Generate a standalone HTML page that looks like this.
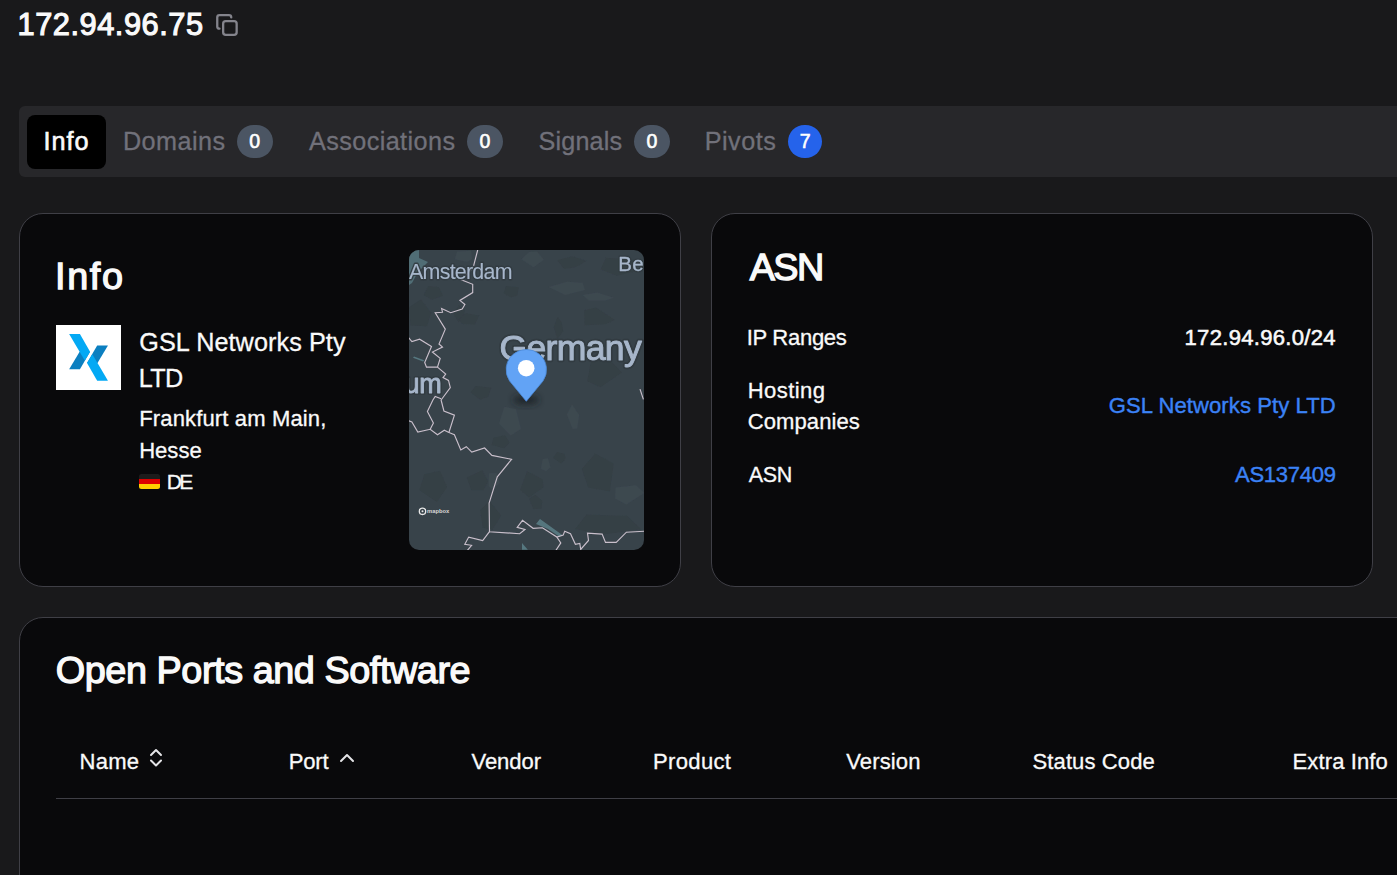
<!DOCTYPE html>
<html><head><meta charset="utf-8"><style>
html,body{margin:0;padding:0}
body{width:1397px;height:875px;overflow:hidden;background:#19191b;position:relative;font-family:"Liberation Sans",sans-serif}
.t{position:absolute;white-space:nowrap}
.b{position:absolute;top:125px;height:33px;border-radius:17px}
.card{position:absolute;box-sizing:border-box;border:1px solid #3f3f46;background:#09090b;border-radius:24px}
</style></head><body>
<div class="t" style="left:17.6px;top:10.0px;font-size:30.8px;line-height:30.8px;letter-spacing:0.509px;color:#fafafa;-webkit-text-stroke:1.1px #fafafa">172.94.96.75</div>
<svg style="position:absolute;left:0;top:0;overflow:visible" width="1" height="1"><g fill="none" stroke="#84848c" stroke-width="2.3" stroke-linecap="round" stroke-linejoin="round"><rect x="223.15" y="21.15" width="13.5" height="13.7" rx="2.6" ry="2.6"/><path d="M219.5,28.65 c-1.25,0 -2.25,-1 -2.25,-2.25 V17.4 c0,-1.25 1,-2.25 2.25,-2.25 h9.5 c1.25,0 2.25,1 2.25,2.25"/></g></svg>
<div style="position:absolute;left:19px;top:106px;width:1420px;height:71px;background:#27272a;border-radius:6px"></div>
<div style="position:absolute;left:27px;top:115px;width:79px;height:54px;background:#000000;border-radius:8px"></div>
<div class="t" style="left:43.6px;top:129.0px;font-size:25.2px;line-height:25.2px;letter-spacing:0.933px;color:#fafafa;-webkit-text-stroke:0.6px #fafafa">Info</div><div class="t" style="left:123.0px;top:129.0px;font-size:25.2px;line-height:25.2px;letter-spacing:0.433px;color:#71717a;-webkit-text-stroke:0.3px #71717a">Domains</div><div class="t" style="left:309.0px;top:129.0px;font-size:25.2px;line-height:25.2px;letter-spacing:0.418px;color:#71717a;-webkit-text-stroke:0.3px #71717a">Associations</div><div class="t" style="left:538.5px;top:129.0px;font-size:25.2px;line-height:25.2px;letter-spacing:0.167px;color:#71717a;-webkit-text-stroke:0.3px #71717a">Signals</div><div class="t" style="left:704.7px;top:129.0px;font-size:25.2px;line-height:25.2px;letter-spacing:0.52px;color:#71717a;-webkit-text-stroke:0.3px #71717a">Pivots</div>
<div class="b" style="left:237px;width:35.5px;background:#4b5563"></div><div class="t" style="left:249.2px;top:132.2px;font-size:19.5px;line-height:19.5px;-webkit-text-stroke:0.6px #fff;color:#fff">0</div>
<div class="b" style="left:467px;width:36px;background:#4b5563"></div><div class="t" style="left:479.5px;top:132.2px;font-size:19.5px;line-height:19.5px;-webkit-text-stroke:0.6px #fff;color:#fff">0</div>
<div class="b" style="left:634px;width:36px;background:#4b5563"></div><div class="t" style="left:646.5px;top:132.2px;font-size:19.5px;line-height:19.5px;-webkit-text-stroke:0.6px #fff;color:#fff">0</div>
<div class="b" style="left:788px;width:34px;background:#2563eb"></div><div class="t" style="left:799.7px;top:132.2px;font-size:19.5px;line-height:19.5px;-webkit-text-stroke:0.6px #fff;color:#fff">7</div>
<div class="card" style="left:19px;top:213px;width:662px;height:374px"></div>
<div class="card" style="left:711px;top:213px;width:662px;height:374px"></div>
<div class="card" style="left:19px;top:617px;width:1500px;height:400px"></div>
<div class="t" style="left:55.0px;top:257.8px;font-size:37.8px;line-height:37.8px;letter-spacing:1.667px;color:#fafafa;-webkit-text-stroke:1.3px #fafafa">Info</div>
<svg style="position:absolute;left:56px;top:325px" width="65" height="65" viewBox="155 145 633 633"><rect x="155" y="145" width="633" height="633" fill="#fff"/>
<polygon points="385,405 487,405 388,575 283,575" fill="#0b7fc0"/>
<polygon points="283,232 388,232 487,405 435,490" fill="#03a9f4"/>
<polygon points="661,345 556,345 457,515 559,515" fill="#0b7fc0"/>
<polygon points="661,688 556,688 457,515 509,430" fill="#03a9f4"/>
</svg>
<div class="t" style="left:139.3px;top:330.0px;font-size:25.2px;line-height:25.2px;letter-spacing:0.093px;color:#fafafa;-webkit-text-stroke:0.3px #fafafa">GSL Networks Pty</div><div class="t" style="left:138.8px;top:366.0px;font-size:25.2px;line-height:25.2px;letter-spacing:-0.6px;color:#fafafa;-webkit-text-stroke:0.3px #fafafa">LTD</div><div class="t" style="left:139.2px;top:407.7px;font-size:22.05px;line-height:22.05px;letter-spacing:0.129px;color:#fafafa;-webkit-text-stroke:0.3px #fafafa">Frankfurt am Main,</div><div class="t" style="left:139.2px;top:440.0px;font-size:22.05px;line-height:22.05px;letter-spacing:0.0px;color:#fafafa;-webkit-text-stroke:0.3px #fafafa">Hesse</div>
<div style="position:absolute;left:139px;top:474px;width:21px;height:15px;border-radius:2.5px;overflow:hidden;background:linear-gradient(#1c1c1c 0 33.3%,#dd0000 33.3% 66.6%,#ffce00 66.6%)"></div>
<div class="t" style="left:166.8px;top:470.7px;font-size:21.0px;line-height:21.0px;letter-spacing:-2.6px;color:#fafafa;-webkit-text-stroke:0.3px #fafafa">DE</div>
<div style="position:absolute;left:409px;top:250px;width:235px;height:300px;border-radius:10px;overflow:hidden"><svg width="235" height="300" viewBox="409 250 235 300" style="display:block">
<defs><filter id="blr" x="-50%" y="-50%" width="200%" height="200%"><feGaussianBlur stdDeviation="3"/></filter>
<filter id="blr2" x="-50%" y="-50%" width="200%" height="200%"><feGaussianBlur stdDeviation="0.6"/></filter></defs>
<rect x="409" y="250" width="235" height="300" fill="#38434a"/>
<g filter="url(#blr2)">
<polygon points="423.6,295.3 428.4,286.1 439.1,287.2 442.9,295.7 432.1,299.8" fill="#353f45"/>
<polygon points="458.4,322.6 453.3,313.3 459.1,305.5 464.9,310.6 463.8,316.8" fill="#353f45"/>
<polygon points="458.7,319.3 466.0,313.3 479.2,315.6 474.9,324.4 462.5,324.1" fill="#353f45"/>
<polygon points="505.9,286.0 518.7,287.3 517.4,295.4 510.5,297.2 503.6,293.3" fill="#353f45"/>
<polygon points="572.2,256.3 586.7,260.9 574.8,267.5 564.0,268.7 557.2,260.3" fill="#353f45"/>
<polygon points="584.6,325.2 584.2,310.2 596.0,307.5 615.0,320.1 605.3,324.3" fill="#353f45"/>
<polygon points="563.1,331.2 557.5,338.9 553.7,327.3 557.4,317.0 561.6,322.0" fill="#353f45"/>
<polygon points="587.2,381.2 591.1,360.3 609.1,358.9 621.9,372.4 600.4,387.3" fill="#353f45"/>
<polygon points="488.2,396.9 479.8,399.5 470.3,392.2 475.7,386.1 491.4,387.7" fill="#353f45"/>
<polygon points="493.3,437.7 505.2,435.3 509.6,442.5 503.9,448.2 491.6,444.9" fill="#353f45"/>
<polygon points="561.4,463.8 553.0,457.9 557.0,451.9 564.2,453.8 565.8,458.1" fill="#353f45"/>
<polygon points="613.7,463.4 609.9,491.5 588.2,487.6 581.7,469.1 595.2,453.6" fill="#353f45"/>
<polygon points="529.1,498.7 535.2,494.7 542.2,500.4 541.5,508.5 533.4,509.2" fill="#353f45"/>
<polygon points="471.3,490.2 466.7,477.6 482.3,470.2 488.0,481.6 483.4,490.2" fill="#353f45"/>
<polygon points="641.3,529.3 603.3,534.5 575.1,529.1 586.6,514.5 627.5,516.1" fill="#353f45"/>
<polygon points="409.0,307.6 421.0,299.5 431.2,312.8 427.0,326.3 410.5,325.5" fill="#353f45"/>
<polygon points="419.3,490.2 424.2,474.2 440.0,470.8 447.2,487.3 436.9,502.1" fill="#353f45"/>
<polygon points="635.5,259.7 635.8,271.2 616.8,275.8 600.6,269.3 605.9,257.7" fill="#353f45"/>
<polygon points="520.1,489.8 527.1,471.2 542.5,479.2 543.7,487.3 529.1,497.4" fill="#353f45"/>
<polygon points="492.3,530.1 482.7,527.6 480.2,510.2 489.2,500.8 501.2,515.4" fill="#353f45"/>
<polygon points="582.6,282.7 584.8,289.9 565.2,295.1 548.7,286.9 567.1,281.7" fill="#3d4850"/>
<polygon points="605.4,300.4 588.8,300.6 582.7,295.1 597.2,292.5 613.8,297.7" fill="#3d4850"/>
<polygon points="543.8,259.8 533.5,267.3 521.5,259.3 529.2,251.9 536.9,251.5" fill="#3d4850"/>
<polygon points="472.1,259.1 467.1,262.0 454.8,259.3 457.1,251.4 471.1,250.8" fill="#3d4850"/>
<polygon points="504.3,406.8 516.0,409.1 521.0,428.9 510.7,435.4 499.0,423.8" fill="#3d4850"/>
<polygon points="566.9,414.6 572.0,404.5 579.2,415.1 577.2,428.6 572.6,428.9" fill="#3d4850"/>
<polygon points="542.8,459.1 547.9,458.2 550.5,467.2 546.0,471.2 540.8,468.8" fill="#3d4850"/>
<polygon points="636.0,485.2 644.2,492.9 626.3,504.4 615.1,498.5 615.6,487.6" fill="#3d4850"/>
<polygon points="496.6,473.0 499.7,483.0 492.7,489.5 488.7,486.2 488.9,473.3" fill="#3d4850"/>
</g>
<polygon points="409,250 419,250 419,258 428,262 418,272 412,283 409,285" fill="#506d75"/>
<polygon points="540,519 563,535.5 559,536.5 548,529 536,524" fill="#5a7f87" opacity="0.85"/>
<polygon points="522,542.9 527.8,549.7 522,549.7" fill="#567880"/>
<polygon points="414,356.6 424.2,360.3 423,361.5 413,357.8" fill="#567880"/>
<g fill="none" stroke="#c9bfcb" stroke-width="1.15" stroke-linejoin="miter">
<polyline points="477.7,250 473.2,267.4 461.3,279.8 472.7,284.3 472.7,292.6 459.9,300.4 464.9,304.5 462.2,309 450.7,312.7 441.6,308.6 442.5,312.2 435.2,312.7 445.3,329.1 439,344 442.5,347 432.4,352 440.2,358.4 437.5,367.1 445.7,374 443,377.6 448.5,380.4 450.3,387.7 441.1,400 443.9,411 454.4,415.1 448.9,432.5 454.4,434.8 460.8,449.9 466.3,446.7 471.8,452.1 484.6,448 491.9,455.4 511.6,459.3 497.3,476.8 489.1,503 489.5,531.7 519.7,533.7 525,529.4 517.2,527.3 522.5,520.3 533.1,528.3 542.4,527.8 556.9,537.1 563.2,535.1 564.7,531.2 570.5,533.7 575.4,544.3 579.8,543.4 580.7,549.5 588.5,540.5 587.5,533.2 602.1,534.1 605.5,542.4 616.2,542.4 626.4,532.2 645,531.2"/>
<polyline points="556.9,537.1 560.8,542.9 555.5,551"/>
<polyline points="489.5,531.7 482.7,540.5 468.7,537.1 464.8,544.3 471.6,545.3 466,552"/>
<polyline points="408,336.9 411.9,341.5 419.6,339.2 431.5,346.5 424.7,362.5 426.5,367.1 437.5,367.1"/>
<polyline points="441.1,398.7 435.2,396.4 432.9,400 427.4,411.4 433.4,422.9 430.2,429.3"/>
<polyline points="408,420.6 411.9,422 417.8,432 430.2,429.3 437.5,434.8 444.3,430.2 448.9,432.5"/>
<polyline points="640,389.1 643.4,399.4"/>
</g>
<g font-family="Liberation Sans" fill="#323b41" stroke="#323b41" stroke-linejoin="round" opacity="0.9"><text x="409.1" y="278.9" font-size="21.4" letter-spacing="-0.75" stroke-width="2.85">Amsterdam</text><text x="618.2" y="271.4" font-size="20.5" letter-spacing="0.5" stroke-width="2.85">Be</text><text x="346" y="393.2" font-size="27" letter-spacing="-0.3" stroke-width="3.9">Belgium</text><text x="499.4" y="360.1" font-size="35.6" letter-spacing="-0.667" stroke-width="4.5">Germany</text></g><g font-family="Liberation Sans" fill="#a9b9cd" stroke="#a9b9cd" stroke-linejoin="round" opacity="0.99"><text x="409.1" y="278.9" font-size="21.4" letter-spacing="-0.75" stroke-width="0.1">Amsterdam</text><text x="618.2" y="271.4" font-size="20.5" letter-spacing="0.5" stroke-width="0.35">Be</text><text x="346" y="393.2" font-size="27" letter-spacing="-0.3" stroke-width="0.9">Belgium</text><text x="499.4" y="360.1" font-size="35.6" letter-spacing="-0.667" stroke-width="1.0">Germany</text></g>
<ellipse cx="526" cy="400" rx="13" ry="5" fill="#1d2226" opacity="0.8" filter="url(#blr)"/>
<path d="M526.3,401.3 L509.6,381 A20.2,20.2 0 1 1 543,381 Z" fill="#62a3f5" stroke="#4c8ad8" stroke-width="0.8"/>
<circle cx="526.2" cy="368.2" r="8.3" fill="#fff"/>
<g transform="translate(422.5,511.3)"><circle r="3.2" fill="none" stroke="#e8e8e8" stroke-width="1.3"/><circle r="1" fill="#e8e8e8"/></g>
<text x="427" y="513.3" font-family="Liberation Sans" font-weight="700" font-size="5.8" fill="#d8d8d8">mapbox</text>
</svg>
</div>
<div class="t" style="left:749.7px;top:249.4px;font-size:37.8px;line-height:37.8px;letter-spacing:-1.6px;color:#fafafa;-webkit-text-stroke:1.3px #fafafa">ASN</div><div class="t" style="left:746.7px;top:327.0px;font-size:22.05px;line-height:22.05px;letter-spacing:-0.3px;color:#fafafa;-webkit-text-stroke:0.3px #fafafa">IP Ranges</div><div class="t" style="left:747.7px;top:380.0px;font-size:22.05px;line-height:22.05px;letter-spacing:0.434px;color:#fafafa;-webkit-text-stroke:0.3px #fafafa">Hosting</div><div class="t" style="left:747.7px;top:410.5px;font-size:22.05px;line-height:22.05px;letter-spacing:0.075px;color:#fafafa;-webkit-text-stroke:0.3px #fafafa">Companies</div><div class="t" style="left:748.7px;top:464.5px;font-size:21.5px;line-height:21.5px;letter-spacing:-0.3px;color:#fafafa;-webkit-text-stroke:0.3px #fafafa">ASN</div><div class="t" style="left:1184.5px;top:327.3px;font-size:22.05px;line-height:22.05px;letter-spacing:0.307px;color:#fafafa;-webkit-text-stroke:0.55px #fafafa">172.94.96.0/24</div><div class="t" style="left:1108.7px;top:394.9px;font-size:22.05px;line-height:22.05px;letter-spacing:0.084px;color:#3b82f6;-webkit-text-stroke:0.4px #3b82f6">GSL Networks Pty LTD</div><div class="t" style="left:1235.0px;top:464.2px;font-size:22.05px;line-height:22.05px;letter-spacing:-0.286px;color:#3b82f6;-webkit-text-stroke:0.4px #3b82f6">AS137409</div>
<div class="t" style="left:55.8px;top:652.0px;font-size:37.8px;line-height:37.8px;letter-spacing:-0.436px;color:#fafafa;-webkit-text-stroke:1.3px #fafafa">Open Ports and Software</div>
<div class="t" style="left:79.6px;top:750.9px;font-size:22.05px;line-height:22.05px;letter-spacing:0.2px;color:#fafafa;-webkit-text-stroke:0.3px #fafafa">Name</div><div class="t" style="left:288.7px;top:750.9px;font-size:22.05px;line-height:22.05px;letter-spacing:-0.2px;color:#fafafa;-webkit-text-stroke:0.3px #fafafa">Port</div><div class="t" style="left:471.5px;top:750.9px;font-size:22.05px;line-height:22.05px;letter-spacing:-0.08px;color:#fafafa;-webkit-text-stroke:0.3px #fafafa">Vendor</div><div class="t" style="left:653.0px;top:750.9px;font-size:22.05px;line-height:22.05px;letter-spacing:0.333px;color:#fafafa;-webkit-text-stroke:0.3px #fafafa">Product</div><div class="t" style="left:846.2px;top:750.9px;font-size:22.05px;line-height:22.05px;letter-spacing:0.134px;color:#fafafa;-webkit-text-stroke:0.3px #fafafa">Version</div><div class="t" style="left:1032.5px;top:750.9px;font-size:22.05px;line-height:22.05px;letter-spacing:0.1px;color:#fafafa;-webkit-text-stroke:0.3px #fafafa">Status Code</div><div class="t" style="left:1292.5px;top:750.9px;font-size:22.05px;line-height:22.05px;letter-spacing:0.112px;color:#fafafa;-webkit-text-stroke:0.3px #fafafa">Extra Info</div>
<svg style="position:absolute;left:0;top:0;overflow:visible" width="1" height="1"><g fill="none" stroke="#e4e4e7" stroke-width="2" stroke-linecap="round" stroke-linejoin="round">
<polyline points="151,755 156,750 161,755"/><polyline points="151,760.5 156,765.5 161,760.5"/><polyline points="341,761 347,755 353,761"/></g></svg>
<div style="position:absolute;left:56px;top:798px;width:1400px;height:1px;background:#3f3f46"></div>
</body></html>
